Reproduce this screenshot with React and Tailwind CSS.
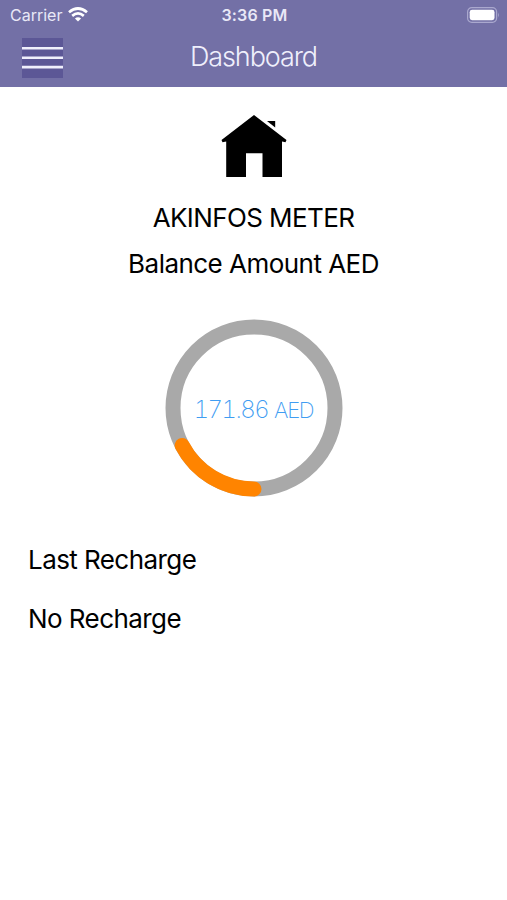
const RADIUS = 81;
const CIRCUMFERENCE = 2 * Math.PI * RADIUS;

function MenuIcon() {
  return (
    <svg width="41" height="40" viewBox="0 0 41 40" stroke="#efeffc" strokeWidth="2.6">
      <path d="M0 10.3 H41 M0 19.7 H41 M0 29.1 H41" />
    </svg>
  );
}

function WifiIcon() {
  return (
    <svg width="20" height="15" viewBox="0 0 20 15" fill="none" stroke="#fff" strokeWidth="2.7">
      <path d="M1 5.3 Q10 -2.3 19 5.3" />
      <path d="M4.2 8.9 Q10 4 15.8 8.9" />
      <path d="M10 14.6 L6.9 11.6 Q10 9.1 13.1 11.6 Z" fill="#fff" stroke="none" />
    </svg>
  );
}

function BatteryIcon() {
  return (
    <svg width="33" height="16" viewBox="0 0 33 16">
      <rect x="0.6" y="0.6" width="29" height="14.8" rx="4.2" fill="none" stroke="#aaa8ce" strokeWidth="1.2" />
      <rect x="2.7" y="2.8" width="24.8" height="10.4" rx="2.4" fill="#fff" />
      <path d="M31 5.5 Q32.8 8 31 10.5 Z" fill="#aaa8ce" />
    </svg>
  );
}

function HouseIcon() {
  return (
    <svg width="66" height="64" viewBox="0 0 66 64" fill="#000">
      <path d="M33 0 L65.5 25 L64.5 27.2 L61 26.5 V62 H41.5 V38.2 H25 V62 H5.2 V26.5 L1.5 27.2 L0.5 25 Z" />
      <path d="M46 6 H54.2 V12.6 Z" />
    </svg>
  );
}

function BalanceRing({ amount, fraction }) {
  return (
    <div className="relative flex h-[178px] w-[178px] items-center justify-center">
      <svg className="absolute inset-0" width="178" height="178" viewBox="0 0 178 178" fill="none">
        <circle cx="89" cy="89" r={RADIUS} stroke="#a9a9a9" strokeWidth="15" />
        <circle
          cx="89"
          cy="89"
          r={RADIUS}
          stroke="#ff8400"
          strokeWidth="15"
          strokeLinecap="round"
          strokeDasharray={`${CIRCUMFERENCE * fraction} ${CIRCUMFERENCE}`}
          transform="rotate(90 89 89)"
        />
      </svg>
      <p className="relative flex items-baseline gap-[6px] whitespace-nowrap pt-[3px] font-extralight text-[#3f9df2]">
        <span className="text-[24px] tabular-nums tracking-[-1.6px]">{amount}</span>
        <span className="text-[22px] tracking-[-1.3px]">AED</span>
      </p>
    </div>
  );
}

export default function App() {
  return (
    <div className="flex h-[900px] w-full flex-col overflow-hidden bg-white font-['Inter',sans-serif] text-black">
      <header className="h-[87px] bg-[#7370a6] text-white">
        <div className="grid h-[29px] grid-cols-3 items-center pl-[9px] pr-[7px]">
          <div className="flex items-center gap-[6px] pl-px text-[#e9e8f7]">
            <span className="text-[16px]">Carrier</span>
            <WifiIcon />
          </div>
          <span className="text-center text-[16px] font-semibold tracking-[0.2px] text-[#e9e8f7]">3:36 PM</span>
          <div className="flex justify-end">
            <BatteryIcon />
          </div>
        </div>
        <div className="grid h-[57px] grid-cols-3 items-center px-[22px]">
          <button aria-label="Menu" className="h-10 w-[41px] bg-[#5c5796]">
            <MenuIcon />
          </button>
          <h1 className="text-center text-[27px] font-light tracking-[-1.1px] text-[#efeffc]">Dashboard</h1>
        </div>
      </header>

      <main className="flex flex-1 flex-col">
        <section className="flex flex-col items-center pt-7">
          <HouseIcon />
          <h2 className="mt-[19px] text-[26px] leading-[40px] tracking-[-0.6px]">AKINFOS METER</h2>
          <p className="mt-[6px] text-[26px] leading-[40px] tracking-[-0.53px]">Balance Amount AED</p>
          <div className="mt-[35px]">
            <BalanceRing amount="171.86" fraction={0.173} />
          </div>
        </section>
        <section className="mt-[43px] px-7 text-[26px] tracking-[-0.57px]">
          <p className="leading-[40px]">Last Recharge</p>
          <p className="mt-[19px] leading-[40px]">No Recharge</p>
        </section>
      </main>
    </div>
  );
}
